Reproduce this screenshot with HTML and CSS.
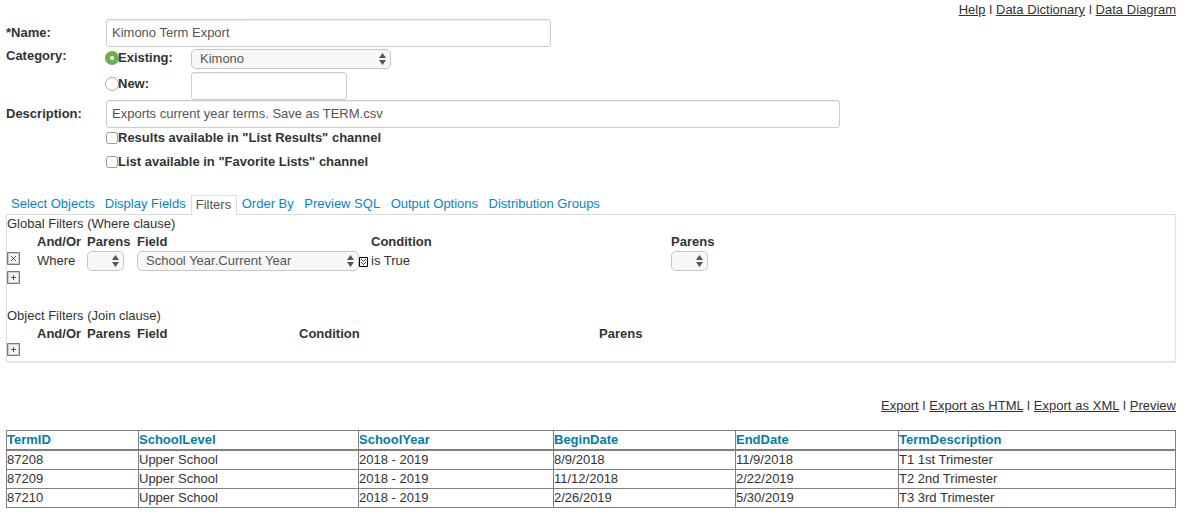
FILE: index.html
```html
<!DOCTYPE html>
<html lang="en">
<head>
<meta charset="utf-8">
<title>Export Template</title>
<link rel="stylesheet" href="styles.css">
</head>
<body>
<svg class="defs" width="0" height="0" aria-hidden="true">
  <symbol id="arrows" viewBox="0 0 7 12"><path d="M0 5 3.5 0 7 5ZM0 7 3.5 12 7 7Z"/></symbol>
  <symbol id="plus" viewBox="0 0 13 13"><path class="frame" d="M.5 .5h12v12H.5z"/><path class="rim" d="M1.5 1.5h10v10h-10z"/><path class="mark" d="M4 6.5h5M6.5 4v5"/></symbol>
  <symbol id="cross" viewBox="0 0 13 13"><path class="frame" d="M.5 .5h12v12H.5z"/><path class="rim" d="M1.5 1.5h10v10h-10z"/><path class="mark" d="m4 4 5 5M9 4 4 9"/></symbol>
</svg>
<nav class="links top-links"><a>Help</a> l <a>Data Dictionary</a> l <a>Data Diagram</a></nav>
<form class="form">
  <div class="row name-row"><label class="label">*Name:</label><div class="input name">Kimono Term Export</div></div>
  <div class="row category-row">
    <label class="label">Category:</label>
    <span class="radio on"></span><label class="option">Existing:</label>
    <div class="select category"><span>Kimono</span><svg class="arrows"><use href="#arrows"/></svg></div>
  </div>
  <div class="row new-row"><span class="label"></span><span class="radio"></span><label class="option">New:</label><div class="input new"></div></div>
  <div class="row description-row"><label class="label">Description:</label><div class="input description">Exports current year terms. Save as TERM.csv</div></div>
  <div class="row check-row"><span class="label"></span><span class="checkbox"></span><label class="results">Results available in "List Results" channel</label></div>
  <div class="row check-row"><span class="label"></span><span class="checkbox"></span><label class="favorites">List available in "Favorite Lists" channel</label></div>
</form>
<nav class="tabs"><a>Select Objects</a><a>Display Fields</a><a class="active">Filters</a><a>Order By</a><a>Preview SQL</a><a>Output Options</a><a>Distribution Groups</a></nav>
<section class="panel">
  <div class="caption">Global Filters (Where clause)</div>
  <div class="grid global">
    <b class="c2">And/Or</b><b>Parens</b><b>Field</b><b>Condition</b><b>Parens</b>
  </div>
  <div class="grid global body">
    <svg class="icon"><use href="#cross"/></svg>
    <span>Where</span>
    <div class="select parens"><svg class="arrows"><use href="#arrows"/></svg></div>
    <div class="field"><div class="select school"><span>School Year.Current Year</span><svg class="arrows"><use href="#arrows"/></svg></div><svg class="expand" viewBox="0 0 9 10"><path class="box" d="M.5 .5h8v9h-8z"/><path class="chevrons" d="m2 2 2.5 2.5L7 2M2 5l2.5 2.5L7 5"/></svg></div>
    <span>is True</span>
    <div class="select parens"><svg class="arrows"><use href="#arrows"/></svg></div>
  </div>
  <div class="add"><svg class="icon"><use href="#plus"/></svg></div>
  <div class="caption object-caption">Object Filters (Join clause)</div>
  <div class="grid object">
    <b class="c2">And/Or</b><b>Parens</b><b>Field</b><b>Condition</b><b>Parens</b>
  </div>
  <div class="add object-add"><svg class="icon"><use href="#plus"/></svg></div>
</section>
<nav class="links export-links"><a>Export</a> l <a>Export as HTML</a> l <a>Export as XML</a> l <a>Preview</a></nav>
<table class="terms">
  <colgroup><col class="w-id"><col class="w-level"><col class="w-year"><col class="w-begin"><col class="w-end"><col class="w-desc"></colgroup>
  <thead><tr><th>TermID</th><th>SchoolLevel</th><th>SchoolYear</th><th>BeginDate</th><th>EndDate</th><th>TermDescription</th></tr></thead>
  <tbody>
    <tr><td>87208</td><td>Upper School</td><td>2018 - 2019</td><td>8/9/2018</td><td>11/9/2018</td><td>T1 1st Trimester</td></tr>
    <tr><td>87209</td><td>Upper School</td><td>2018 - 2019</td><td>11/12/2018</td><td>2/22/2019</td><td>T2 2nd Trimester</td></tr>
    <tr><td>87210</td><td>Upper School</td><td>2018 - 2019</td><td>2/26/2019</td><td>5/30/2019</td><td>T3 3rd Trimester</td></tr>
  </tbody>
</table>
</body>
</html>
```
FILE: styles.css
```css
* { box-sizing: border-box; }
body {
  margin: 0;
  padding: 0 16px 0 6px;
  height: 525px;
  overflow: hidden;
  background: #fff;
  color: #333;
  font: 13px/18px "Liberation Sans", Arial, sans-serif;
  white-space: nowrap;
}
.defs { display: block; }
.links { text-align: right; height: 18px; }
.links a { text-decoration: underline; }
.top-links { margin-top: 1px; word-spacing: .2px; }

.form { font-weight: bold; }
.row { display: flex; align-items: center; }
.label { width: 100px; }
.name-row { height: 28px; }
.category-row { height: 24px; margin-bottom: 1px; }
.category-row .label { padding-bottom: 6px; }
.category-row .option { padding-bottom: 2px; }
.category-row .radio { margin-bottom: 2px; }
.new-row { height: 28px; }
.new-row .option { padding-bottom: 4px; }
.new-row .radio { margin-bottom: 4px; }
.description-row { height: 28px; }
.check-row { height: 24px; }
.check-row:nth-of-type(5) { height: 20px; }
.check-row:last-child { height: 28px; }
.input {
  height: 28px;
  padding: 0 5px;
  border: 1px solid #ccc;
  border-radius: 3px;
  box-shadow: inset 0 1px 1px rgba(0, 0, 0, .07);
  color: #555;
  font-weight: normal;
  line-height: 26px;
}
.name { width: 445px; }
.new { width: 156px; }
.description { width: 734px; }
.radio {
  width: 14px;
  height: 14px;
  margin: 0 -1px 0 -1px;
  border: 1px solid #aaa;
  border-radius: 50%;
}
.radio.on { border: 5px solid #6ab04c; }
.option { width: 73px; }
.checkbox { width: 12px; height: 12px; border: 1px solid #999; border-radius: 3px; }

.select {
  display: flex;
  align-items: center;
  justify-content: space-between;
  height: 20px;
  padding: 0 4px 0 8px;
  border: 1px solid #c6c6c6;
  border-radius: 5px;
  background: #f7f7f7;
  color: #555;
  font-weight: normal;
}
.arrows { width: 7px; height: 12px; fill: #555; margin-left: auto; }
.category { width: 200px; }
.parens { width: 37px; }
.school { width: 222px; }

.tabs { display: flex; height: 19px; margin-top: 19px; }
.tabs a { color: #0088cc; padding: 0 5px; }
.tabs .active {
  width: 46px;
  height: 20px;
  padding: 0 4px;
  border: 1px solid #ddd;
  border-bottom: 0;
  background: #fff;
  color: #555;
}
.tabs .active ~ a { padding-right: 5.5px; }
.panel {
  height: 148px;
  border: 1px solid #ddd;
  box-shadow: 0 1px 1px rgba(0, 0, 0, .06);
}
.caption { height: 18px; }
.grid { display: grid; height: 18px; }
.global { grid-template-columns: 30px 50px 50px 234px 300px 1fr; }
.object { grid-template-columns: 30px 50px 50px 162px 300px 1fr; }
.c2 { grid-column: 2; }
.body { height: 20px; line-height: 20px; }
.icon { display: block; width: 13px; height: 13px; }
.body .icon { margin-top: 1px; }
.field { display: flex; align-items: center; }
.expand { width: 9px; height: 10px; margin-top: 2px; }
.add { height: 37px; }
.object-caption { margin-top: -1px; }
.object-add { height: auto; }
.frame { fill: #f4f4f4; stroke: #777; }
.rim { fill: none; stroke: #ccc; }
.mark { fill: none; stroke: #555; }
.box { fill: #fff; stroke: #000; }
.chevrons { fill: none; stroke: #000; stroke-width: .8; }

.export-links { margin-top: 35px; word-spacing: .25px; }
.terms {
  width: 1170px;
  margin-top: 15px;
  table-layout: fixed;
  border-spacing: 0;
  border: solid #808080;
  border-width: 1px 0 0 1px;
}
.terms th, .terms td {
  padding: 0;
  border: solid #808080;
  border-width: 0 1px 1px 0;
  text-align: left;
}
.terms th { height: 20px; border-bottom-width: 2px; color: #007ea5; }
.terms td { height: 19px; }
.w-id { width: 132px; }
.w-level { width: 220px; }
.w-year { width: 195px; }
.w-begin { width: 182px; }
.w-end { width: 163px; }
.w-desc { width: 277px; }
```
